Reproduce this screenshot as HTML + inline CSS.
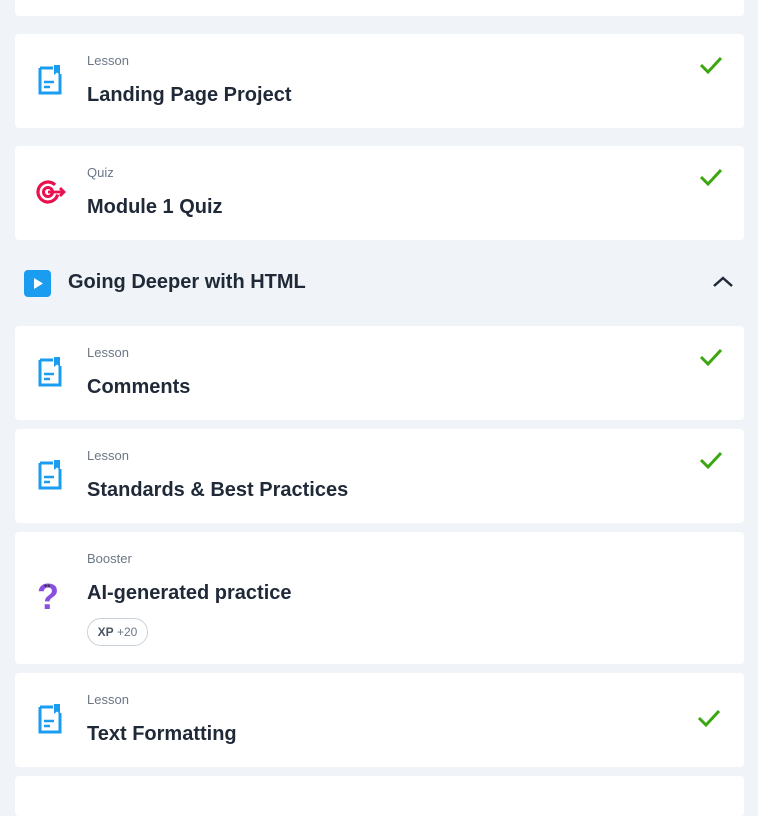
<!DOCTYPE html><html><head><style>
body{margin:0;background:#f0f3f7;font-family:"Liberation Sans",sans-serif;width:758px;height:792px;overflow:hidden;position:relative}
.c{position:absolute;left:15px;width:729px;background:#fff;border-radius:4px}
.l{position:absolute;left:72px;top:19px;font-size:13px;color:#6b7785}
.t{position:absolute;left:72px;top:50px;font-size:20px;font-weight:bold;color:#1f2937}
.i{position:absolute;left:23px;top:31px}
.k{position:absolute;left:684px;top:20px}
</style></head><body>
<div class="c" style="top:-10px;height:26px"></div>
<svg width="0" height="0" style="position:absolute"><defs>
<g id="doc"><path d="M2 3h13M2 3v25h20V9" fill="none" stroke="#1a9cf0" stroke-width="3"/><path d="M16 0h6v10l-3-2.5-3 2.5z" fill="#1a9cf0"/><path d="M6 17h10M6 22h6" stroke="#1a9cf0" stroke-width="2.6"/></g>
<g id="chk"><path d="M2 11l7 7L22 4" fill="none" stroke="#3aa70f" stroke-width="3"/></g>
</defs></svg>
<div class="c" style="top:34px;height:94px"><svg class="i" width="24" height="30"><use href="#doc"/></svg><div class="l">Lesson</div><div class="t">Landing Page Project</div><svg class="k" width="26" height="22"><use href="#chk"/></svg></div>
<div class="c" style="top:146px;height:94px"><svg class="i" style="left:20px;top:31px" width="34" height="30"><circle cx="13" cy="15" r="10" fill="none" stroke="#e8104f" stroke-width="3.2" stroke-dasharray="52 11" transform="rotate(15 13 15)"/><circle cx="13" cy="15" r="4.5" fill="none" stroke="#e8104f" stroke-width="3"/><path d="M13 15h16M25 11l4 4-4 4" fill="none" stroke="#e8104f" stroke-width="2.8"/></svg><div class="l">Quiz</div><div class="t">Module 1 Quiz</div><svg class="k" width="26" height="22"><use href="#chk"/></svg></div>
<div style="position:absolute;left:24px;top:270px;width:27px;height:27px;background:#1a9cf0;border-radius:4px"><svg width="27" height="27"><path d="M10 8v11l9-5.5z" fill="#fff"/></svg></div>
<div style="position:absolute;left:68px;top:271px;font-size:20px;font-weight:bold;color:#1f2937">Going Deeper with HTML</div>
<svg style="position:absolute;left:712px;top:275px" width="22" height="14"><path d="M2 11l9-8 9 8" fill="none" stroke="#1f2937" stroke-width="2.5"/></svg>
<div class="c" style="top:326px;height:94px"><svg class="i" width="24" height="30"><use href="#doc"/></svg><div class="l">Lesson</div><div class="t">Comments</div><svg class="k" width="26" height="22"><use href="#chk"/></svg></div>
<div class="c" style="top:429px;height:94px"><svg class="i" width="24" height="30"><use href="#doc"/></svg><div class="l">Lesson</div><div class="t">Standards &amp; Best Practices</div><svg class="k" width="26" height="22"><use href="#chk"/></svg></div>
<div class="c" style="top:532px;height:132px"><div style="position:absolute;left:22px;top:44px;font-size:36px;font-weight:bold;color:#8a4fe0">?</div><div style="position:absolute;left:29px;top:49px;font-size:9px;color:#333">••</div><div class="l">Booster</div><div class="t">AI-generated practice</div><div style="position:absolute;left:72px;top:86px;height:26px;width:59px;border:1px solid #c9d1da;border-radius:14px;font-size:12px;color:#6b7785;line-height:26px;text-align:center"><b style="color:#4a5665">XP</b> +20</div></div>
<div class="c" style="top:673px;height:94px"><svg class="i" width="24" height="30"><use href="#doc"/></svg><div class="l">Lesson</div><div class="t">Text Formatting</div><svg class="k" style="left:682px;top:34px" width="26" height="22"><use href="#chk"/></svg></div>
<div class="c" style="top:776px;height:40px"></div>
</body></html>
